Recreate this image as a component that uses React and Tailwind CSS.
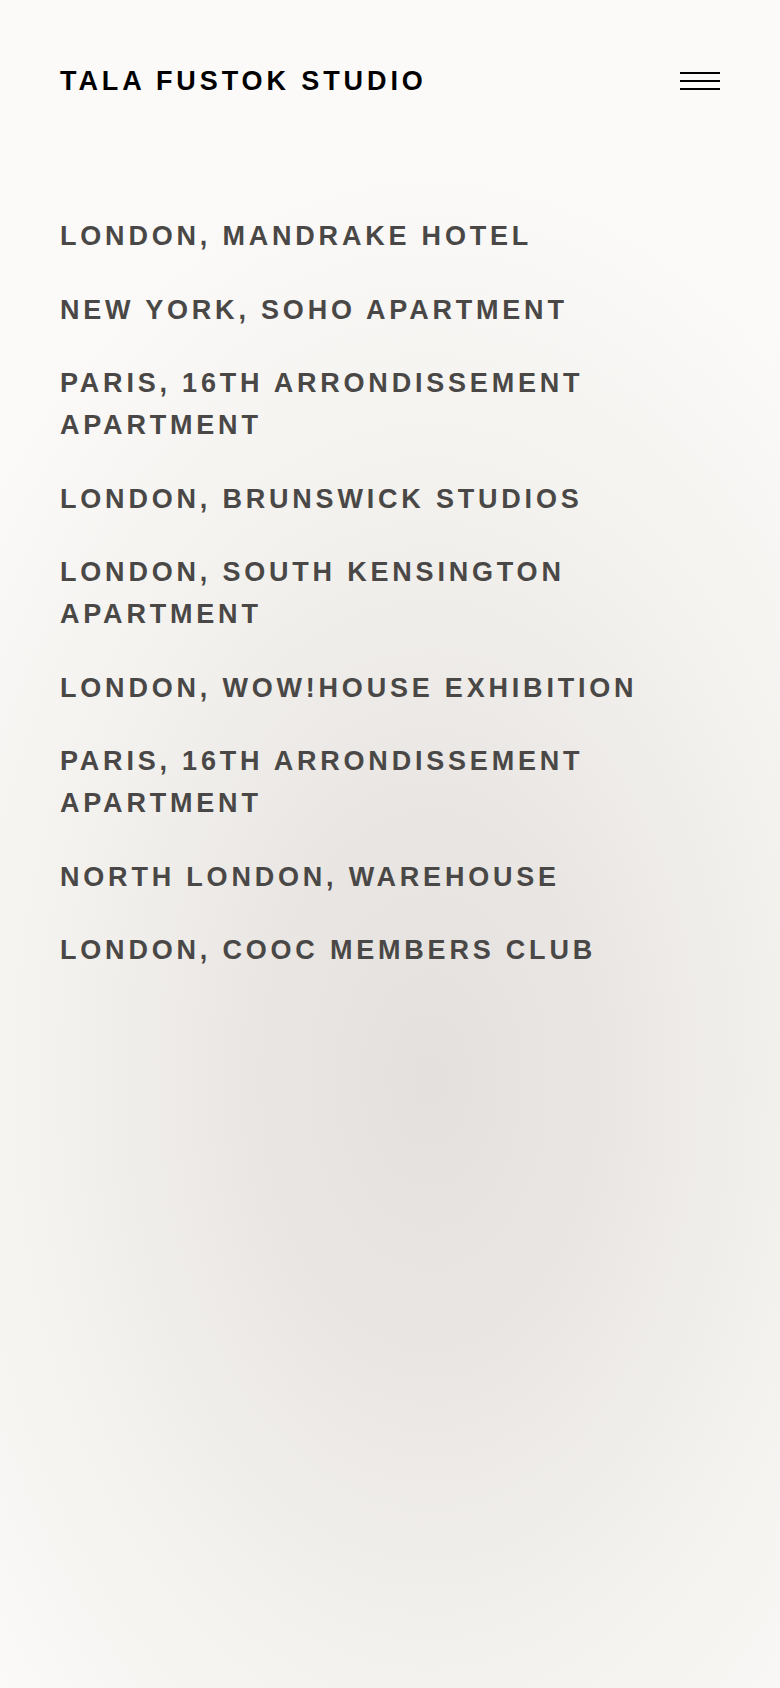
import React from "react";

const items = [
  "LONDON, MANDRAKE HOTEL",
  "NEW YORK, SOHO APARTMENT",
  "PARIS, 16TH ARRONDISSEMENT APARTMENT",
  "LONDON, BRUNSWICK STUDIOS",
  "LONDON, SOUTH KENSINGTON APARTMENT",
  "LONDON, WOW!HOUSE EXHIBITION",
  "PARIS, 16TH ARRONDISSEMENT APARTMENT",
  "NORTH LONDON, WAREHOUSE",
  "LONDON, COOC MEMBERS CLUB",
];

export default function App() {
  return (
    <div
      className="min-h-screen w-full bg-[radial-gradient(ellipse_75%_55%_at_55%_64%,#e4e0dd_0%,#e9e6e3_30%,#f3f1ee_62%,#fbfaf8_100%)]"
      style={{ fontFamily: '"Liberation Sans", Arial, sans-serif' }}
    >
      <header className="flex items-center justify-between px-[60px] pt-[66px]">
        <a className="text-[27px] leading-[30px] font-bold tracking-[3.9px] text-black">
          TALA FUSTOK STUDIO
        </a>
        <button className="flex w-[40px] flex-col gap-[6px]" aria-label="Menu">
          <span className="block h-[2px] w-full bg-black" />
          <span className="block h-[2px] w-full bg-black" />
          <span className="block h-[2px] w-full bg-black" />
        </button>
      </header>
      <ul className="mt-[119px] flex flex-col gap-[31.5px] px-[60px]">
        {items.map((t, i) => (
          <li
            key={i}
            className="text-[27px] leading-[42px] font-bold tracking-[3.8px] text-[#4a4846]"
          >
            {t}
          </li>
        ))}
      </ul>
    </div>
  );
}
